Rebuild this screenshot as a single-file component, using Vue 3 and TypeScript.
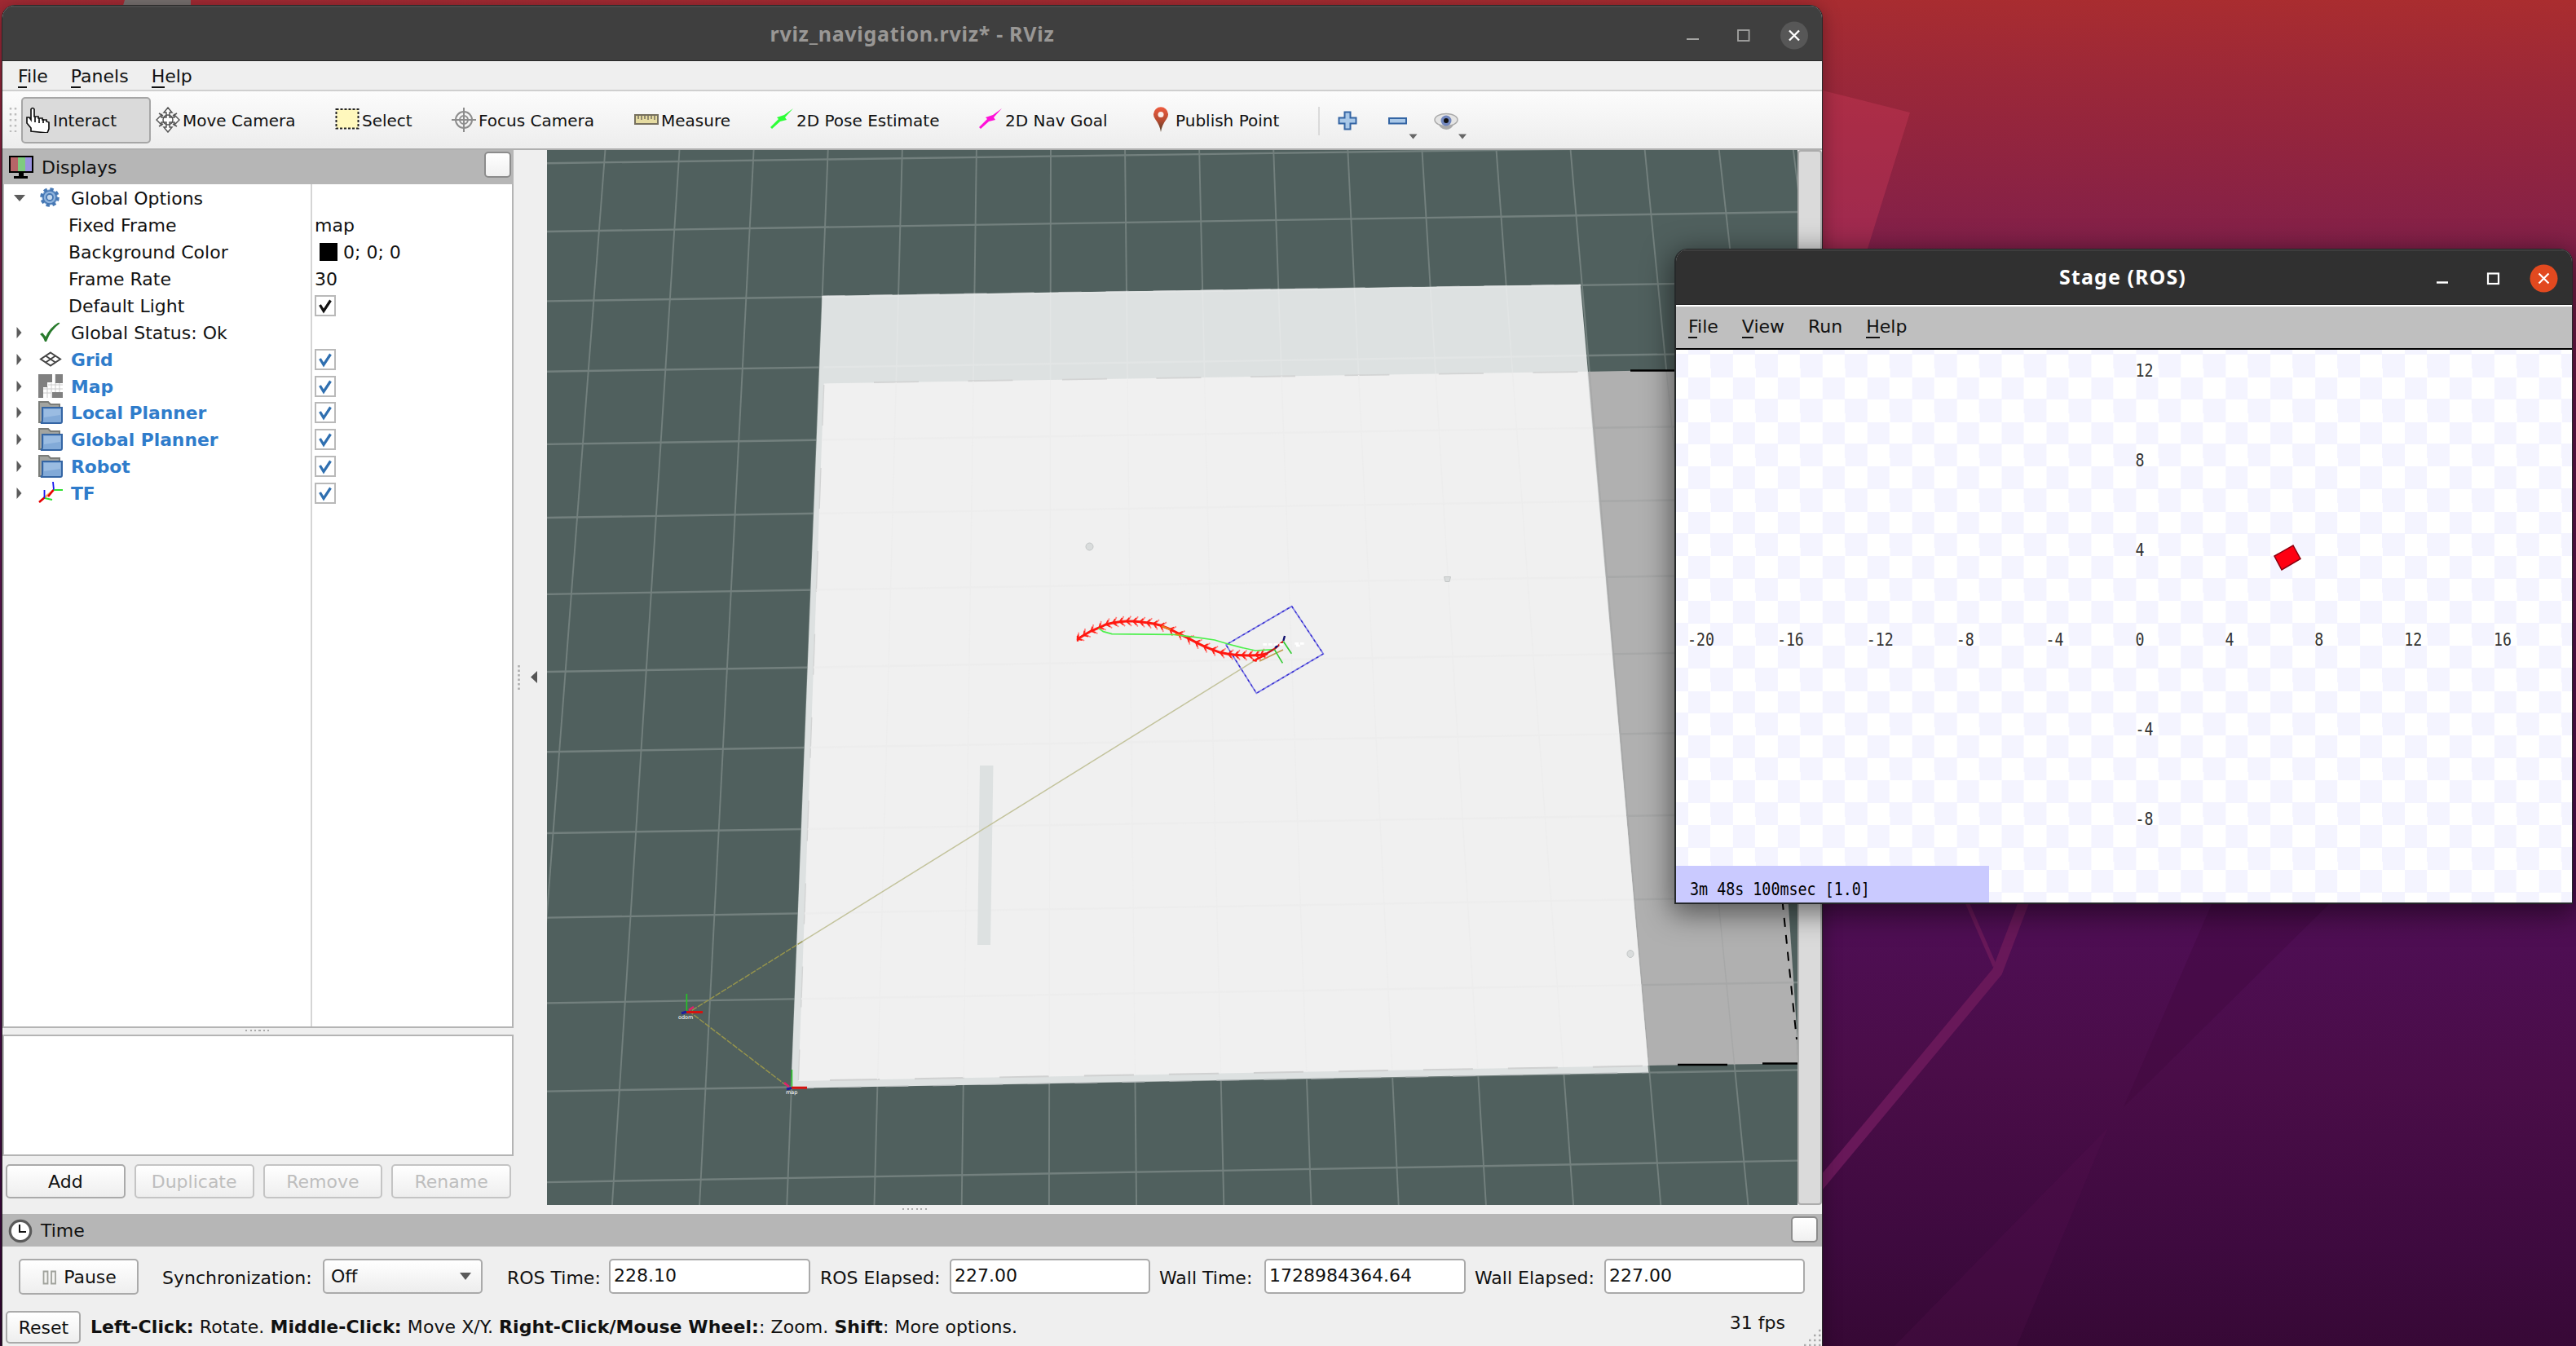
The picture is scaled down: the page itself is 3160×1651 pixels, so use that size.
<script setup lang="ts">
interface Tool { id: string; label: string; width: number }
const tools: Tool[] = [
  { id: 'interact', label: 'Interact', width: 159 },
  { id: 'move', label: 'Move Camera', width: 220 },
  { id: 'select', label: 'Select', width: 143 },
  { id: 'focus', label: 'Focus Camera', width: 224 },
  { id: 'measure', label: 'Measure', width: 166 },
  { id: 'pose', label: '2D Pose Estimate', width: 256 },
  { id: 'goal', label: '2D Nav Goal', width: 209 },
  { id: 'point', label: 'Publish Point', width: 215 },
]

interface Row { label: string; icon?: string; child?: boolean; open?: boolean; display?: boolean; value?: string; swatch?: boolean; check?: boolean }
const rows: Row[] = [
  { label: 'Global Options', icon: 'gear', open: true },
  { label: 'Fixed Frame', child: true, value: 'map' },
  { label: 'Background Color', child: true, value: '0; 0; 0', swatch: true },
  { label: 'Frame Rate', child: true, value: '30' },
  { label: 'Default Light', child: true, check: true },
  { label: 'Global Status: Ok', icon: 'ok' },
  { label: 'Grid', icon: 'grid', display: true, check: true },
  { label: 'Map', icon: 'map', display: true, check: true },
  { label: 'Local Planner', icon: 'folder', display: true, check: true },
  { label: 'Global Planner', icon: 'folder', display: true, check: true },
  { label: 'Robot', icon: 'folder', display: true, check: true },
  { label: 'TF', icon: 'tf', display: true, check: true },
]

const clocks = [
  { label: 'ROS Time:', value: '228.10', start: 30, labelWidth: 125, width: 247 },
  { label: 'ROS Elapsed:', value: '227.00', start: 12, labelWidth: 159, width: 246 },
  { label: 'Wall Time:', value: '1728984364.64', start: 11, labelWidth: 129, width: 247 },
  { label: 'Wall Elapsed:', value: '227.00', start: 11, labelWidth: 159, width: 246 },
]

// Perspective floor grid, in window coordinates
const columns = Array.from({ length: 20 }, (_, n) => {
  const i = n - 5
  return { a: 1015.7 + 91.09 * i, b: 965.3 + 107.2 * i }
})
const lanes: [number, number][] = [
  [200.2, 179], [284, 260], [369.4, 345.7], [455.7, 432.2], [544.9, 521], [635, 611], [728.9, 704],
  [824, 798.5], [922.3, 896.7], [1022, 997.5], [1125.6, 1100], [1230.4, 1205], [1338.6, 1312.5], [1450.1, 1423.6],
]

// Pose trail of the robot with an arrow head at each sample
const trail: [number, number][] = [
  [245, 492], [268, 478], [295, 462], [325, 450], [350, 438], [375, 432], [400, 428], [425, 426], [450, 426], [475, 428],
  [500, 431], [525, 435], [550, 441], [585, 455], [617, 471], [650, 487], [680, 503], [710, 518], [740, 530], [770, 541],
  [800, 547], [825, 550], [850, 551], [875, 552], [900, 551], [920, 550], [940, 545],
]
const trailLine = trail.map((p) => p.join(',')).join(' ')
const heads = trail.slice(0, -1).map((p, i) => {
  const q = trail[i + 1]
  return { x: p[0], y: p[1], r: (Math.atan2(q[1] - p[1], q[0] - p[0]) * 180) / Math.PI }
})

const xTicks = ['-20', '-16', '-12', '-8', '-4', '0', '4', '8', '12', '16']
const yTicks = [
  { t: '12', y: 462 }, { t: '8', y: 572 }, { t: '4', y: 682 }, { t: '-4', y: 902 }, { t: '-8', y: 1012 },
]
</script>

<template>
  <div class="desktop">
    <svg class="wallpaper" viewBox="0 0 3160 1651">
      <polygon points="153,0 234,0 234,10 150,10" fill="#77706f" />
      <polygon points="2200,95 2236,111 2343,138 2291,305 2200,305" fill="#cc3a5a" fill-opacity=".38" />
      <polygon points="2717,1100 2866,1100 2605,1358" fill="#3d0838" fill-opacity=".3" />
      <polygon points="2586,1383 2474,1651 2324,1651" fill="#5a1052" fill-opacity=".22" />
      <path d="M2410 1100L2447 1185" stroke="#681859" stroke-width="5" fill="none" />
      <path d="M2485 1100L2450 1192L2230 1456" stroke="#681859" stroke-width="13" fill="none" />
    </svg>

    <section class="window rviz">
      <header class="titlebar">
        <span class="title">rviz_navigation.rviz* - RViz</span>
        <svg class="winbtns" width="180" height="68" viewBox="2050 6 180 68">
          <path d="M2069 45h15" stroke="#a5a5a3" stroke-width="2.200" />
          <rect x="2132" y="34" width="13.600" height="13" fill="none" stroke="#a5a5a3" stroke-width="1.800" />
          <circle cx="2201" cy="40.500" r="17" fill="#575757" />
          <path d="M2195 34.500l12 12m0-12l-12 12" stroke="#fff" stroke-width="2.300" />
        </svg>
      </header>
      <nav class="menubar"><span><u>F</u>ile</span><span><u>P</u>anels</span><span><u>H</u>elp</span></nav>
      <div class="toolbar">
        <svg class="grip" width="10" height="32"><path d="M2 1v30M8 1v30" stroke="#bcbcbc" stroke-width="2.500" stroke-dasharray="2.500 4.500" /></svg>
        <div v-for="t in tools" :key="t.id" class="tool" :class="{ active: t.id === 'interact' }" :style="{ width: t.width + 'px' }">
          <svg width="30" height="32" viewBox="0 0 30 32">
            <path v-if="t.id === 'interact'" d="M6 30V26L1 20V13h3l2 3V3q2-3 4 0v9h5v2h5v2h5v2l3 1v8l-2 5z M11 12v7M16 14v6M21 15v5" fill="#fff" stroke="#111" stroke-width="1.700" />
            <g v-else-if="t.id === 'move'" fill="#fff" stroke="#555" stroke-width="1.500">
              <path d="M15 1l5 6h-3v6h6v-3l6 6-6 6v-3h-6v6h3l-5 6-5-6h3v-6H7v3l-6-6 6-6v3h6V7h-3z" />
              <circle cx="15" cy="16" r="6" fill="none" /><path d="M4 8l5 3M26 8l-5 3M4 24l5-3M26 24l-5-3" />
            </g>
            <rect v-else-if="t.id === 'select'" x="1.500" y="3" width="27" height="23.500" fill="#fff8bd" stroke="#222" stroke-width="2" stroke-dasharray="3 2" />
            <g v-else-if="t.id === 'focus'" fill="none" stroke="#8d8d8d" stroke-width="2">
              <circle cx="15" cy="16" r="10" /><circle cx="15" cy="16" r="5" /><path d="M15 1v30M0 16h30" />
            </g>
            <g v-else-if="t.id === 'measure'" stroke="#77715f"><rect x="1" y="10" width="28" height="11" fill="#e6dca2" stroke-width="2" /><path d="M5 10v5M9 10v6M13 10v5M17 10v6M21 10v5M25 10v6" stroke-width="1.500" /></g>
            <path v-else-if="t.id === 'pose'" d="M1 25l10-10-2-2 9-3L29 2 19 13l2 3-8 2-10 9z" fill="#2dff37" />
            <path v-else-if="t.id === 'goal'" d="M1 25l10-10-2-2 9-3L29 2 19 13l2 3-8 2-10 9z" fill="#ff10d8" />
            <g v-else>
              <defs><linearGradient id="pin" x2="0" y2="1"><stop offset="0" stop-color="#ee5b3e" /><stop offset=".55" stop-color="#b34b31" /><stop offset="1" stop-color="#4a3b25" /></linearGradient></defs>
              <path d="M15 31Q14 23 8 15A9 9 0 1 1 22 15Q16 23 15 31z" fill="url(#pin)" /><circle cx="15" cy="9.500" r="3.500" fill="#fbeeea" />
            </g>
          </svg>
          <span>{{ t.label }}</span>
        </div>
        <svg class="extras" width="200" height="68" viewBox="1616 112 200 68">
          <path d="M1618 130v35" stroke="#d2d2d2" stroke-width="1.500" />
          <path d="M1649.500 136.500h7v7h7v7h-7v7h-7v-7h-7v-7h7z" fill="#a9c8e8" stroke="#3465a4" stroke-width="2" />
          <rect x="1704" y="144" width="21" height="6.500" fill="#a9c8e8" stroke="#3465a4" stroke-width="2" />
          <circle cx="1774" cy="148" r="10" fill="#aaa" /><ellipse cx="1774" cy="146" rx="14" ry="7.500" fill="#e4e4e4" stroke="#aaa" stroke-width="1.500" />
          <circle cx="1774" cy="147" r="6.500" fill="#7186bd" /><circle cx="1774" cy="147" r="3" fill="#111" />
          <path d="M1728.500 163.500h10l-5 6zM1789 163.500h10l-5 6z" fill="#666" />
        </svg>
      </div>

      <div class="work">
        <aside class="displays">
          <div class="panelhead">
            <svg width="30" height="30" viewBox="0 0 30 30"><rect x="0" y="1" width="30" height="21" fill="#000" /><path d="M2 3h9v17H2z" fill="#b66668" /><path d="M11 3h9v17h-9z" fill="#7fcb80" /><path d="M20 3h8v17h-8z" fill="#9a92e0" /><path d="M12 22h6v4h5v3H6v-3h6z" fill="#000" /></svg>
            <span>Displays</span><i class="float" />
          </div>
          <div class="tree">
            <div v-for="r in rows" :key="r.label" class="row">
              <div class="name" :class="{ display: r.display, child: r.child }">
                <svg v-if="!r.child" class="arrow" width="14" height="16" viewBox="0 0 14 16"><path :d="r.open ? 'M0 4h14l-7 8z' : 'M3.500 1v14l6-7z'" fill="#5c5c5c" /></svg>
                <svg v-if="!r.child" class="ico" width="30" height="30" viewBox="0 0 30 30">
                  <g v-if="r.icon === 'gear'"><circle cx="14" cy="14" r="9.800" fill="#8fb3dc" stroke="#4678b4" stroke-width="4" stroke-dasharray="4.200 3.500" /><circle cx="14" cy="14" r="8" fill="#8fb3dc" stroke="#4678b4" stroke-width="1.500" /><circle cx="14" cy="14" r="4" fill="#c3d8ee" stroke="#4678b4" stroke-width="1.800" /></g>
                  <path v-else-if="r.icon === 'ok'" d="M2 17l3-2 4 5Q14 9 24 3q3-1 2 1Q15 12 10 26H8Q6 20 2 17z" fill="#287a2c" />
                  <path v-else-if="r.icon === 'grid'" d="M15 6.500L27 14.500 15 22.500 3 14.500zM9 10.500l12 8M21 10.500l-12 8" fill="none" stroke="#444" stroke-width="2" />
                  <g v-else-if="r.icon === 'map'"><path d="M0 0h30v30H0z" fill="#fff" /><path d="M11 15v14M16 11v18M21 0v22M26 11v11M6 18h24M6 23h10M12 13h18" stroke="#ccc" /><path d="M0 0h17v10h-6v6H6v13H0zM21 0h9v11h-9zM17 22h13v7H17z" fill="#808080" /></g>
                  <g v-else-if="r.icon === 'folder'"><path d="M1 2h11l3 3h11v22H1z" fill="#a2a4a0" stroke="#7a7c78" stroke-width="2" /><path d="M5 9h24v17q0 2-2 2H3q2-1 2-3z" fill="#82aad8" stroke="#3465a4" stroke-width="2" /><path d="M7 11h20v7L7 21z" fill="#9abce2" /></g>
                  <g v-else fill="none" stroke-width="1.800"><path d="M19 11L8 20" stroke="#ffa060" stroke-width="2.500" /><path d="M18.500 11L12 19M8 20L1 26" stroke="#e60000" stroke-width="2.600" /><path d="M18 1l1 10M7.500 11v10" stroke="#1717f0" /><path d="M19 11h11M8 21l9 2" stroke="#2fe02f" /></g>
                </svg>
                <span>{{ r.label }}</span>
              </div>
              <div class="value">
                <i v-if="r.swatch" class="swatch" /><span v-if="r.value">{{ r.value }}</span>
                <svg v-if="r.check" width="26" height="26" viewBox="0 0 26 26"><rect x="1" y="1" width="24" height="24" fill="#fff" stroke="#b9b9b9" stroke-width="2" /><path d="M6.500 12l4.500 7.500L19.500 6.500" fill="none" :stroke="r.display ? '#2f6fb0' : '#111'" stroke-width="3.200" /></svg>
              </div>
            </div>
          </div>
          <div class="hsplit"><i /></div>
          <div class="description" />
          <div class="actions"><button>Add</button><button disabled>Duplicate</button><button disabled>Remove</button><button disabled>Rename</button></div>
        </aside>

        <div class="vsplit">
          <svg width="41" height="40" viewBox="0 0 41 40"><path d="M6.500 5v30" stroke="#aaa" stroke-width="2.500" stroke-dasharray="2.500 3" /><path d="M29 12v15l-8-7.500z" fill="#555" /></svg>
        </div>

        <svg class="scene" width="1534" height="1294" viewBox="671 184 1534 1294">
          <defs>
            <clipPath id="mapArea"><polygon points="1010.700,470.400 1947,455.700 2022,1307 979.400,1325.900" /></clipPath>
            <clipPath id="stripArea"><polygon points="1008.600,363 1938.700,349 1947,455.700 1010.700,470.400" /></clipPath>
            <clipPath id="greyArea"><polygon points="1940,456 2150,452 2204.700,1272 2205,1304.500 2022,1307" /></clipPath>
            <g id="floor">
              <path v-for="(c, i) in columns" :key="'c' + i" :d="`M${c.a} 184L${c.b} 1478`" />
              <path v-for="(l, i) in lanes" :key="'l' + i" :d="`M671 ${l[0]}L2205 ${l[1]}`" stroke-width="2.400" />
            </g>
          </defs>
          <rect x="671" y="184" width="1534" height="1294" fill="#50605e" />
          <use href="#floor" stroke="#73807e" stroke-width="1.900" />
          <polygon points="1940,456 2150,452 2204.700,1272 2205,1304.500 2022,1307" fill="#b0b0b0" />
          <g clip-path="url(#greyArea)"><use href="#floor" stroke="#a7a8a8" stroke-width="1.500" /></g>
          <path d="M2000 454.500h60M2058 1306h61M2162 1304.500h43" stroke="#000" stroke-width="2.400" />
          <path d="M2186.500 1105L2204 1275" stroke="#000" stroke-width="2" stroke-dasharray="11 10" />
          <polygon points="1008.600,363 1938.700,349.200 2022.300,1315.400 970.400,1334.800" fill="#dde1e1" />
          <path d="M1008.600 363L1938.700 349.200M970.400 1334.800L2022.300 1315.400" stroke="#b5babb" stroke-width="1.200" stroke-dasharray="28 30" />
          <g clip-path="url(#stripArea)"><use href="#floor" stroke="#e2e5e5" stroke-width="1.600" /></g>
          <polygon points="1010.700,470.400 1947,455.700 2022,1307 979.400,1325.900" fill="#f0f0f0" />
          <path d="M1072 469L1940 456" stroke="#d3d4d4" stroke-width="1.800" stroke-dasharray="55 60.500" />
          <path d="M1018 1325L2022 1307.500" stroke="#d0d1d1" stroke-width="2" stroke-dasharray="61 43" />
          <path d="M1010.700 472L979.400 1325" stroke="#d3d4d4" stroke-width="1.400" stroke-dasharray="50 52" />
          <g clip-path="url(#mapArea)"><use href="#floor" stroke="#ededed" stroke-width="1.500" /></g>
          <polygon points="1202,939 1218.500,939 1215,1159 1199,1159" fill="#dde1e1" />
          <g fill="#d9dcdc" stroke="#c3c6c6" stroke-width="1"><circle cx="1336.500" cy="670.500" r="4.500" /><path d="M1771.500 707.500h8l-1.500 6h-5z" /><ellipse cx="2000" cy="1170" rx="4" ry="4.500" /></g>
          <g fill="none" stroke-width="1.500">
            <path d="M1541 809L984.500 1154.600" stroke="#c3c39c" />
            <path d="M984.500 1154.600L846 1241L964 1331" stroke="#96944c" stroke-dasharray="7 1.500" />
            <path d="M1574 797L1545 811" stroke="#bd9a50" />
          </g>
          <g transform="translate(1240 620) scale(.33333)" fill="none">
            <polygon points="1034,371 1150,546 904,691 792,513" stroke="#7f7fe6" stroke-width="5" />
            <polygon points="1034,371 1150,546 904,691 792,513" stroke="#3326cc" stroke-width="4" stroke-dasharray="9 12" />
            <g stroke="#ff7d7a" stroke-width="5"><path v-for="(h, i) in heads" :key="i" d="M-19 -18l14 18l-12 19" :transform="`translate(${h.x} ${h.y}) rotate(${h.r + 180})`" /></g>
            <g stroke="#ff2015" stroke-width="5"><path v-for="(h, i) in heads" :key="i" d="M-13 -12l13 12l-11 13" :transform="`translate(${h.x} ${h.y}) rotate(${h.r + 180})`" /></g>
            <polyline :points="trailLine" stroke="#ff1710" stroke-width="9" />
            <path d="M246 480v20M900 568l45-22M905 573l-15-5" stroke="#ff1710" stroke-width="7" />
            <path d="M323 452L340 464L372 473L600 475L680 485L750 495L800 510L850 523L900 534L970 530" stroke="#4cf04c" stroke-width="5" />
            <path d="M555 444L588 457M605 473L625 477" stroke="#e4821c" stroke-width="6" />
            <path d="M940 545L970 528L1003 500" stroke="#c9161c" stroke-width="7" />
            <path d="M970 530L1000 580M1003 500L1033 545" stroke="#35cc35" stroke-width="5" />
            <path d="M973 524l9-9M1003 498l5-18" stroke="#10106e" stroke-width="7" />
            <path d="M928 511h75M1045 508h35M1050 516h20" stroke="#fff" stroke-width="8" stroke-dasharray="14 6" />
          </g>
          <path d="M842.400 1219v22M971.400 1312v22" stroke="#26c526" stroke-width="1.600" />
          <path d="M842 1241.500h20M971 1334.300h19" stroke="#d5120f" stroke-width="3" />
          <path d="M836 1243l6-2M965 1336l6-1.500" stroke="#1d1d9c" stroke-width="3" />
          <path d="M845 1239l6-4M962 1328l6 5" stroke="#e2206b" stroke-width="2.500" />
          <text x="832" y="1250" font-size="6.500" fill="#fff">odom</text>
          <text x="964" y="1342" font-size="6.500" fill="#fff">map</text>
        </svg>
        <div class="sidebar" />
      </div>

      <div class="hsplit bottom"><i /></div>
      <div class="panelhead time">
        <svg width="30" height="30" viewBox="0 0 30 30"><circle cx="15" cy="15" r="12.700" fill="#fff" stroke="#5a5a5a" stroke-width="3.200" /><path d="M14 7v9h8" fill="none" stroke="#111" stroke-width="2" /></svg>
        <span>Time</span><i class="float" />
      </div>
      <div class="timebar">
        <button class="pause"><svg width="18" height="18" viewBox="0 0 18 18"><path d="M1.500 1.500h5v15h-5zM11 1.500h5v15h-5z" fill="#f4f4f2" stroke="#a0a29c" stroke-width="1.800" /></svg>Pause</button>
        <span class="sync">Synchronization:</span>
        <div class="combo">Off<svg width="14" height="9"><path d="M0 0h14L7 9z" fill="#5a5a5a" /></svg></div>
        <template v-for="c in clocks" :key="c.label">
          <label :style="{ marginLeft: c.start + 'px', width: c.labelWidth + 'px' }">{{ c.label }}</label>
          <div class="field" :style="{ width: c.width + 'px' }">{{ c.value }}</div>
        </template>
      </div>
      <footer class="status">
        <button class="reset">Reset</button>
        <p><b>Left-Click:</b> Rotate. <b>Middle-Click:</b> Move X/Y. <b>Right-Click/Mouse Wheel:</b>: Zoom. <b>Shift</b>: More options.</p>
        <span class="fps">31 fps</span>
        <svg class="sizegrip" width="24" height="24" viewBox="0 0 24 24"><path d="M2 22h22M8 16h16M14 10h10M20 4h4" stroke="#aaa" stroke-width="2.500" stroke-dasharray="2.500 3.500" /></svg>
      </footer>
    </section>

    <section class="window stage">
      <header class="titlebar">
        <span class="title">Stage (ROS)</span>
        <svg class="winbtns" width="180" height="68" viewBox="2971 306 180 68">
          <path d="M2990 344.500h14" stroke="#fff" stroke-width="2.400" />
          <rect x="3053" y="333.500" width="13" height="12.500" fill="none" stroke="#fff" stroke-width="2.200" />
          <circle cx="3121.500" cy="339.500" r="17" fill="#e2491f" />
          <path d="M3115.500 333.500l12 12m0-12l-12 12" stroke="#fff" stroke-width="2.200" />
        </svg>
      </header>
      <nav class="menubar"><span><u>F</u>ile</span><span><u>V</u>iew</span><span>Run</span><span><u>H</u>elp</span></nav>
      <div class="canvas">
        <svg width="1099" height="678" viewBox="2056 429 1099 678">
          <polygon points="2813,669 2822,685.500 2799,699 2790,682" fill="#ff0012" stroke="#8a0010" stroke-width="1.500" />
          <g fill="#333">
            <text v-for="(t, i) in xTicks" :key="t" :transform="`translate(${2070 + i * 109.9} 792) scale(.83 1)`">{{ t }}</text>
            <text v-for="t in yTicks" :key="t.t + 'y'" :transform="`translate(2619.500 ${t.y}) scale(.83 1)`">{{ t.t }}</text>
          </g>
          <rect x="2056" y="1062" width="384" height="45" fill="#cacaff" />
          <text transform="translate(2073 1097.500) scale(.834 1)" xml:space="preserve">3m 48s 100msec [1.0]</text>
        </svg>
      </div>
    </section>
  </div>
</template>

<style>
body { margin: 0; overflow: hidden; }
</style>

<style scoped>
* { box-sizing: border-box; }
.desktop { position: relative; width: 3160px; height: 1651px; overflow: hidden; font: 22px/26px "DejaVu Sans", sans-serif; color: #111; background: linear-gradient(181deg, #aa2d2f 0, #9c2838 6%, #94253d 10%, #832049 18%, #6b1851 30%, #4e0e53 68%, #4a0d48 78%, #3e0a3f 90%, #340832 100%); }
.wallpaper { position: absolute; inset: 0; width: 3160px; height: 1651px; }
svg { display: block; flex: none; }
button { font: inherit; color: #111; margin: 0; padding: 2px 0 0; border: 2px solid #aaa; border-radius: 5px; background: linear-gradient(#fff, #eee); display: flex; align-items: center; justify-content: center; }
button:disabled { color: #bebebe; border-color: #c4c4c4; }
.window { position: absolute; display: flex; flex-direction: column; }
.titlebar { display: flex; align-items: center; justify-content: center; position: relative; flex: none; font: bold 25px/34px "Noto Sans", sans-serif; }
.winbtns { position: absolute; right: 5px; top: 0; }
u { text-decoration: none; box-shadow: inset 0 -2px 0 #111; padding-bottom: 2px; }
.menubar { display: flex; flex: none; }

.rviz { left: 2px; top: 6px; width: 2234px; height: 1660px; background: #efefef; border: 1px solid #292929; border-bottom: 0; border-radius: 16px 16px 0 0; overflow: hidden; box-shadow: 0 4px 22px rgba(0, 0, 0, .35); }
.rviz .titlebar { height: 68px; background: #3f3f3f; color: #999795; border-top: 2px solid #4a4a4a; border-bottom: 1px solid #292929; }
.rviz .title { letter-spacing: .72px; padding-bottom: 2px; }
.rviz .menubar { height: 37px; padding: 6px 0 0 19px; gap: 28px; border-bottom: 2px solid #cfcfcf; }
.toolbar { display: flex; align-items: center; height: 72px; flex: none; padding-left: 8px; background: linear-gradient(#fcfcfc, #ededed); border-bottom: 2px solid #b0b0b0; box-shadow: inset 0 -1px #efefef; font-size: 20px; }
.grip { margin-right: 5px; }
.tool { display: flex; align-items: center; height: 57px; padding-left: 6px; gap: 3px; flex: none; white-space: nowrap; }
.tool span { padding-top: 1px; }
.tool.active { background: #dadada; border: 2px solid #a6a6a6; border-radius: 5px; padding-left: 4px; }
.extras { margin-left: -2px; }
.work { display: flex; height: 1294px; flex: none; border-top: 0; }
.displays { width: 627px; display: flex; flex-direction: column; }
.panelhead { display: flex; align-items: center; height: 42px; flex: none; padding: 0 3px 0 8px; gap: 10px; background: #b6b6b6; }
.panelhead span { padding-top: 1px; }
.float { margin-left: auto; width: 33px; height: 32px; border: 2px solid #8c8c8c; border-radius: 5px; background: linear-gradient(#fff, #f0f0f0); margin-top: -6px; }
.tree { height: 1035px; flex: none; padding-top: 1px; background: linear-gradient(#d5d5d5, #d5d5d5) 376px 0 / 2px 100% no-repeat #fff; border: 2px solid #b4b4b4; border-top: 0; }
.row { display: flex; height: 32.880px; align-items: center; }
.row span { padding-top: 2px; }
.name { width: 379px; display: flex; align-items: center; padding-left: 12px; flex: none; white-space: nowrap; }
.name.child { padding-left: 79px; }
.arrow { margin-right: 16px; }
.ico { margin-right: 10px; }
.display span { font-weight: bold; font-size: 21.800px; color: #2f7ccb; }
.value { display: flex; align-items: center; padding-left: 2px; }
.swatch { width: 22px; height: 22px; background: #000; margin: 0 7px 0 6px; }
.hsplit { height: 8px; flex: none; display: flex; justify-content: center; padding-top: 2px; }
.hsplit i { width: 31px; height: 2px; background: repeating-linear-gradient(90deg, #aaa 0 2px, #efefef 2px 5.500px); }
.description { height: 149px; flex: none; background: #fff; border: 2px solid #b4b4b4; }
.actions { display: flex; gap: 11px; padding: 10px 3px 0 4px; }
.actions button { flex: 1; height: 42px; }
.vsplit { width: 41px; display: flex; align-items: center; flex: none; }
.scene { font-family: "DejaVu Sans", sans-serif; }
.sidebar { flex: 1; background: #dadada; border: 2px solid #acacac; border-radius: 4px; }
.hsplit.bottom { height: 11px; padding: 4px 0 0 6px; }
.time { height: 40px; padding: 1px 5px 0 7px; }
.time .float { margin-top: -4px; }
.timebar { display: flex; height: 79px; flex: none; padding: 15px 0 0 20px; align-items: flex-start; white-space: nowrap; }
.timebar > span, .timebar label { padding-top: 11px; flex: none; }
.pause { width: 147px; height: 44px; gap: 8px; padding: 2px 0 0 2px; }
.sync { margin-left: 29px; width: 197px; }
.combo, .field { height: 43px; border: 2px solid #aaa; border-radius: 5px; flex: none; padding-left: 4px; line-height: 37px; background: #fff; }
.combo { width: 196px; padding: 0 12px 0 8px; display: flex; align-items: center; justify-content: space-between; background: linear-gradient(#fff, #ededed); }
.status { display: flex; align-items: flex-start; padding-left: 4px; white-space: nowrap; }
.reset { width: 92px; height: 40px; padding: 1px 0 0 1px; }
.status p { margin: 7px 0 0 12px; font-size: 22px; letter-spacing: .08px; }
.fps { margin: 2px 21px 0 auto; }
.sizegrip { margin-top: 20px; }

.stage { left: 2054px; top: 305px; width: 1102px; height: 804px; border: 1px solid #26292a; border-width: 1px 1px 2px 2px; border-radius: 16px 16px 0 0; background: #bfbfbf; box-shadow: 0 8px 34px 4px rgba(0, 0, 0, .5); overflow: hidden; }
.stage .titlebar { height: 68px; background: #303030; color: #fff; border-top: 2px solid #3d3d3d; border-bottom: 1px solid #262626; }
.stage .title { letter-spacing: 1.100px; padding: 0 3px 3px 0; }
.stage .menubar { height: 55px; background: #bfbfbf; border-top: 2px solid #fff; border-bottom: 2px solid #000; padding: 12px 0 0 15px; gap: 29px; }
.canvas { height: 678px; flex: none; background: repeating-conic-gradient(#fff 0 25%, #f4f4ff 0 50%) 15px 33px / 54.950px 55px; font: 22px "DejaVu Sans Mono", monospace; }
</style>
